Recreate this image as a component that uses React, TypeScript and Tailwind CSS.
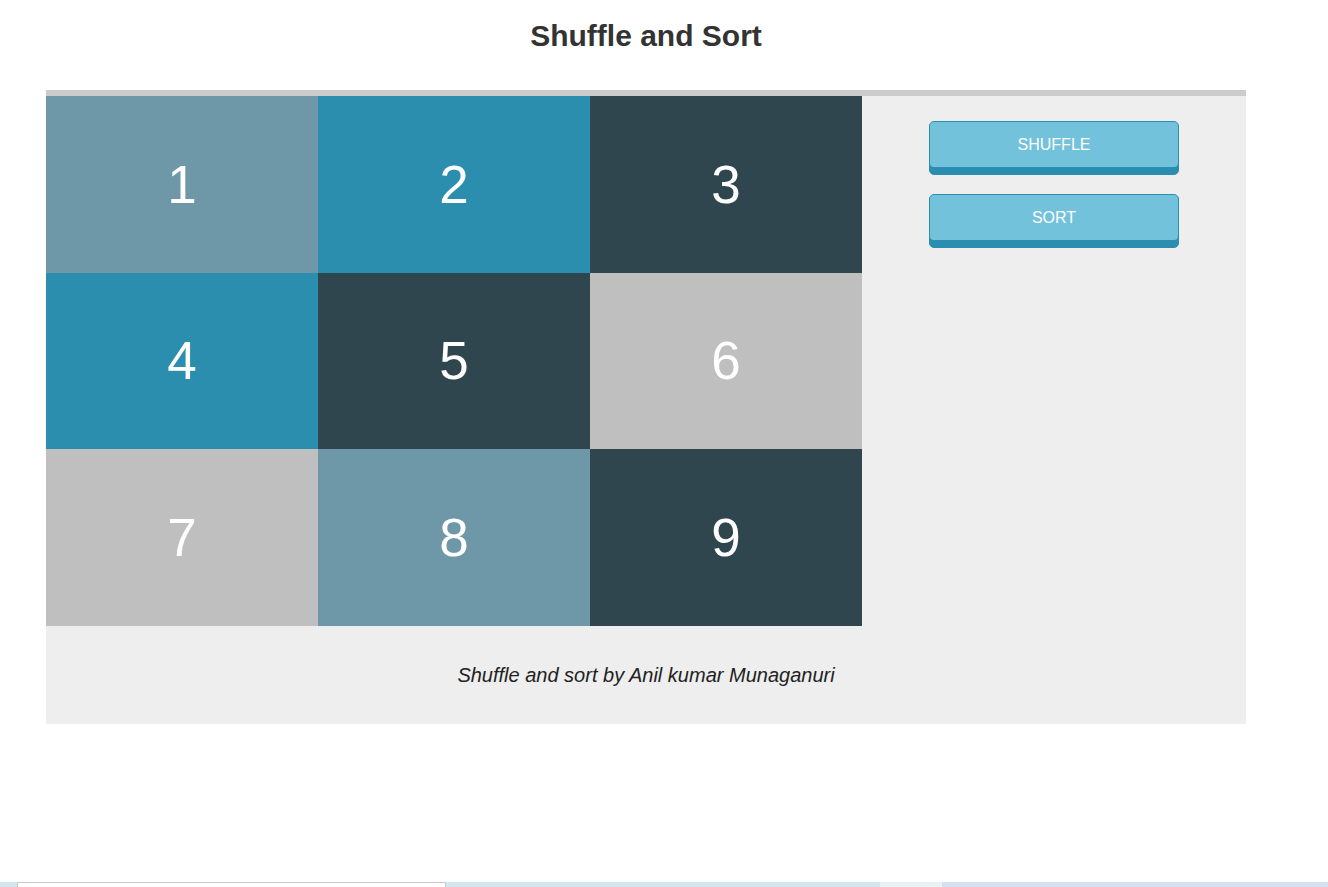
const cells = [
  { n: 1, color: "bg-[#6e98a8]" },
  { n: 2, color: "bg-[#2b8eaf]" },
  { n: 3, color: "bg-[#2f464f]" },
  { n: 4, color: "bg-[#2b8eaf]" },
  { n: 5, color: "bg-[#2f464f]" },
  { n: 6, color: "bg-[#bfbfbf]" },
  { n: 7, color: "bg-[#bfbfbf]" },
  { n: 8, color: "bg-[#6e98a8]" },
  { n: 9, color: "bg-[#2f464f]" },
];

const App = () => {
  return (
    <div className="flex min-h-[887px] flex-col bg-white font-['Liberation_Sans',Arial,sans-serif] text-[#333]">
      <div className="ml-[46px] w-[1200px]">
        <h1 className="pt-[18px] text-center text-[30px] font-bold leading-[36px] text-[#333]">
          Shuffle and Sort
        </h1>
        <div className="mt-[36px] border-t-[6px] border-[#cccccc] bg-[#eeeeee]">
          <div className="flex">
            <div className="grid w-[816px] grid-cols-3">
              {cells.map((c, i) => (
                <div
                  key={c.n}
                  className={`flex items-center justify-center text-[53px] text-white ${c.color} ${
                    i >= 3 && i < 6 ? "h-[176px]" : "h-[177px]"
                  }`}
                >
                  {c.n}
                </div>
              ))}
            </div>
            <div className="flex flex-1 flex-col items-center gap-[19px] pt-[25px]">
              {["SHUFFLE", "SORT"].map((label) => (
                <button
                  key={label}
                  className="flex h-[54px] w-[250px] flex-col justify-start rounded-[5px] border border-[#2b8daf] bg-[#2b8daf] p-0"
                >
                  <span className="flex h-[45px] w-full items-center justify-center rounded-[4px] bg-[#72c2dc] text-[16px] text-white">
                    {label}
                  </span>
                </button>
              ))}
            </div>
          </div>
          <div className="flex h-[98px] items-center justify-center">
            <p className="text-[20px] italic text-[#222]">
              Shuffle and sort by Anil kumar Munaganuri
            </p>
          </div>
        </div>
      </div>
      <div className="mt-auto flex h-[5px] w-full">
        <div className="w-[17px] bg-[#d2e8ee]"></div>
        <div className="w-[429px] border-l border-t border-r border-[#c8c8c8] bg-white"></div>
        <div className="w-[434px] bg-[#d2e8ee]"></div>
        <div className="w-[62px] bg-[#e8f3f5]"></div>
        <div className="flex-1 bg-[#d3e3ee]"></div>
      </div>
    </div>
  );
};

export default App;
